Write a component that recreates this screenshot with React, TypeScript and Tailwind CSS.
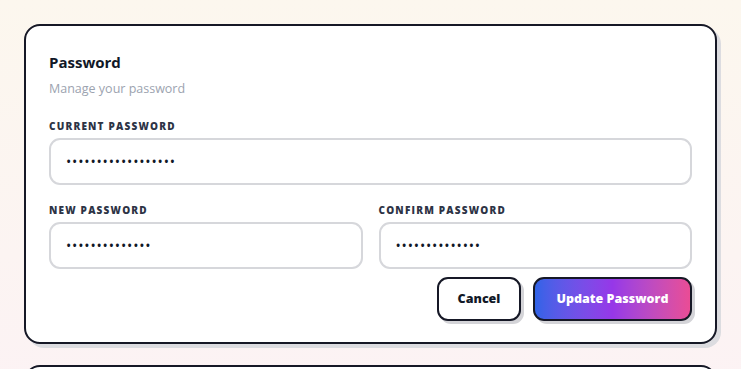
import { useState } from 'react';

function Field({ label, value }: { label: string; value: string }) {
  const [v, setV] = useState(value);
  return (
    <div className="flex flex-col">
      <label className="text-[10px] font-extrabold tracking-[0.12em] text-[#2d3345] uppercase mb-[5px] leading-[14px]">
        {label}
      </label>
      <input
        type="password"
        value={v}
        onChange={(e) => setV(e.target.value)}
        className="h-[47px] rounded-[11px] border-2 border-[#d6d7db] bg-white px-[15px] text-[14px] text-[#111827] outline-none tracking-[0.06em]"
      />
    </div>
  );
}

export default function App() {
  return (
    <div
      className="min-h-screen bg-gradient-to-b from-[#fcf7ee] to-[#fcf1f6] px-[24px] pt-[24px] pb-6"
      style={{ fontFamily: '"Open Sans", "Noto Sans", sans-serif' }}
    >
      <div className="flex flex-col gap-[21px]">
        <section className="rounded-[16px] border-2 border-[#161826] bg-white px-[23px] pt-[26px] pb-[21px] shadow-[4px_4px_0_0_#dcdce0]">
          <h2 className="text-[15px] font-bold leading-[20px] text-[#111827]">Password</h2>
          <p className="mt-[8px] text-[12.5px] leading-[17px] text-[#9ca3af]">Manage your password</p>

          <div className="mt-[22px]">
            <Field label="Current Password" value="supersecretpass123" />
          </div>

          <div className="mt-[18px] grid grid-cols-2 gap-[16px]">
            <Field label="New Password" value="newpassword123" />
            <Field label="Confirm Password" value="newpassword123" />
          </div>

          <div className="mt-[8px] flex justify-end gap-[12px]">
            <button className="h-[44px] w-[84px] rounded-[11px] border-2 border-[#161826] bg-white text-[12.5px] font-extrabold text-[#111827] shadow-[3px_3px_0_0_#d4d4d8]">
              Cancel
            </button>
            <button className="h-[44px] w-[159px] rounded-[11px] border-2 border-[#161826] bg-gradient-to-r from-[#2f63e7] via-[#9637e8] to-[#ea4c95] text-[12.5px] font-extrabold text-white shadow-[3px_3px_0_0_#d4d4d8]">
              Update Password
            </button>
          </div>
        </section>

        <section className="h-[120px] rounded-[16px] border-2 border-[#161826] bg-white shadow-[4px_4px_0_0_#dcdce0]" />
      </div>
    </div>
  );
}
